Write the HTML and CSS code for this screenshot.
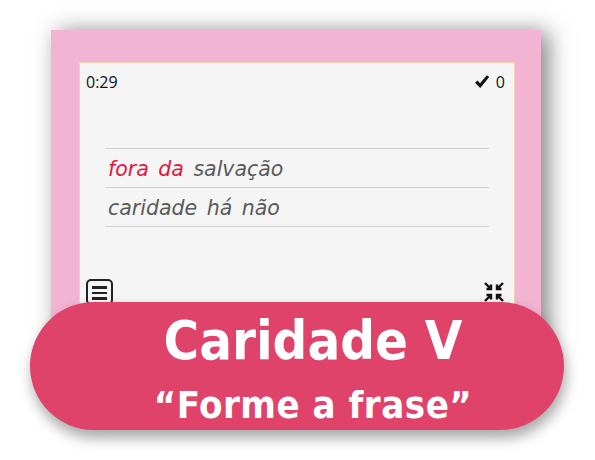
FILE: index.html
```html
<!DOCTYPE html>
<html lang="pt">
<head>
<meta charset="utf-8">
<title>Caridade V</title>
<link rel="stylesheet" href="styles.css">
</head>
<body>
<div class="stage">
  <div class="card">
    <div class="panel">
      <div class="topbar">
        <span class="timer">0:29</span>
        <span class="score">
          <svg class="check" viewBox="0 0 16 16" width="16" height="16"><path d="M1 8.8 L3.6 6.6 L6.1 9.3 L12.9 1.2 L15.2 3 L6.3 14 Z" fill="#111"/></svg>
          <span>0</span>
        </span>
      </div>
      <div class="lines">
        <div class="row"><span class="done">fora</span> <span class="done">da</span> <span>salvação</span></div>
        <div class="row"><span>caridade</span> <span>há</span> <span>não</span></div>
      </div>
      <div class="tools">
        <span class="menu-btn"><i></i><i></i><i></i></span>
        <svg class="shrink" viewBox="0 0 22 22" width="22" height="22">
          <g stroke="#111" stroke-width="2.4" fill="none">
            <path d="M2 2 L8 8 M8 3.5 V8 H3.5"/>
            <path d="M20 2 L14 8 M14 3.5 V8 H18.5"/>
            <path d="M2 20 L8 14 M8 18.5 V14 H3.5"/>
            <path d="M20 20 L14 14 M14 18.5 V14 H18.5"/>
          </g>
        </svg>
      </div>
    </div>
  </div>
  <div class="banner">
    <div class="title">Caridade V</div>
    <div class="subtitle">“Forme a frase”</div>
  </div>
</div>
</body>
</html>
```

FILE: styles.css
```css
html, body {
  margin: 0;
  padding: 0;
  background: #ffffff;
}

.stage {
  position: relative;
  width: 595px;
  height: 460px;
  padding: 30px 0 0 51px;
  box-sizing: border-box;
  overflow: hidden;
}

.card {
  width: 490px;
  height: 312px;
  background: #f1b4d3;
  padding: 32px 26px 0 28px;
  box-sizing: border-box;
  box-shadow: 7px 2px 22px rgba(0, 0, 0, 0.5);
}

.panel {
  height: 280px;
  background: #f5f5f5;
  border: 1px solid #f7cdb5;
  box-sizing: border-box;
  display: flex;
  flex-direction: column;
}

.topbar {
  display: flex;
  justify-content: space-between;
  align-items: center;
  padding: 8px 9px 0 6px;
  font-family: "Open Sans", "Liberation Sans", sans-serif;
  font-size: 16px;
  color: #111;
  line-height: 22px;
}

.score {
  display: flex;
  align-items: center;
  gap: 6px;
}

.lines {
  margin: 55px 25px 0 25px;
  border-bottom: 1.5px solid #cfcfcf;
}

.row {
  height: 38px;
  border-top: 1.5px solid #cfcfcf;
  font-family: "DejaVu Sans", sans-serif;
  font-style: italic;
  font-size: 20.5px;
  color: #5a5a5a;
  line-height: 40px;
  padding-left: 3px;
  word-spacing: 3px;
}

.row .done {
  color: #e21840;
}

.tools {
  margin-top: auto;
  display: flex;
  justify-content: space-between;
  align-items: flex-start;
  padding: 0 9px 0 6px;
  height: 62px;
}

.menu-btn {
  width: 27px;
  height: 26px;
  border: 2px solid #222;
  border-radius: 5px;
  display: flex;
  flex-direction: column;
  justify-content: flex-start;
  align-items: center;
  gap: 3px;
  padding-top: 5px;
  box-sizing: border-box;
}

.menu-btn i {
  display: block;
  width: 15px;
  height: 2.5px;
  background: #222;
}

.shrink {
  margin-top: 2px;
}

.banner {
  position: absolute;
  left: 30px;
  top: 302px;
  width: 534px;
  height: 128px;
  border-radius: 64px;
  background: #df4369;
  box-shadow: 2px 8px 14px rgba(0, 0, 0, 0.35);
  color: #ffffff;
  font-family: "DejaVu Sans Condensed", "DejaVu Sans", sans-serif;
  font-weight: bold;
  text-align: center;
  display: flex;
  flex-direction: column;
  align-items: center;
  padding-left: 32px;
  box-sizing: border-box;
}

.title {
  font-size: 54px;
  line-height: 60px;
  margin-top: 9px;
}

.subtitle {
  font-size: 38px;
  line-height: 44px;
  margin-top: 12px;
  letter-spacing: 0.5px;
}
```
